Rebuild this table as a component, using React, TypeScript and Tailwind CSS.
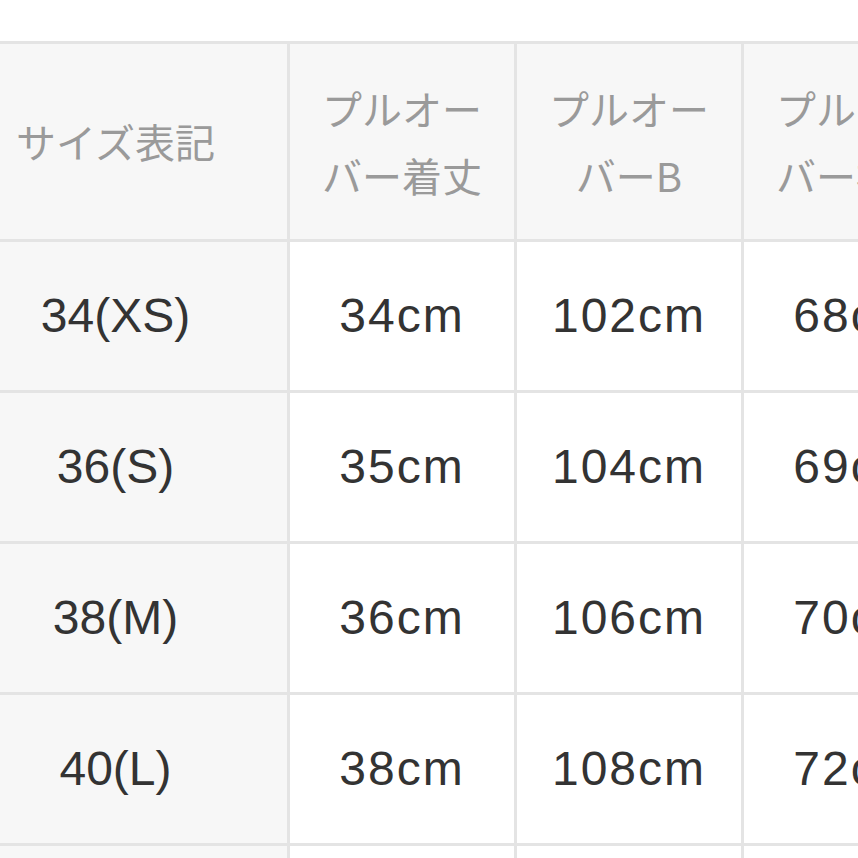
const header = [
  ["サイズ表記"],
  ["プルオー", "バー着丈"],
  ["プルオー", "バーB"],
  ["プルオー", "バー裄丈"],
];

const rows = [
  ["34(XS)", "34cm", "102cm", "68cm"],
  ["36(S)", "35cm", "104cm", "69cm"],
  ["38(M)", "36cm", "106cm", "70cm"],
  ["40(L)", "38cm", "108cm", "72cm"],
  ["", "", "", ""],
];

const cellBase =
  "flex flex-col items-center justify-center text-center border-r-[3px] border-b-[3px] border-[#e4e4e4]";

export default function App() {
  return (
    <div className="w-[858px] h-[858px] overflow-hidden bg-white pt-[41px]">
      <div
        className="-ml-[56px] w-[1027px] grid grid-cols-[346px_227px_227px_227px] border-t-[3px] border-[#e4e4e4]"
        style={{ fontFamily: '"Liberation Sans", "Noto Sans CJK JP", sans-serif' }}
      >
        {header.map((lines, i) => (
          <div
            key={i}
            className={`${cellBase} h-[198px] bg-[#f7f7f7] text-[40px] leading-[67px] text-[#9a9a9a]`}
            style={{ fontFamily: '"Noto Sans CJK JP", sans-serif' }}
          >
            {lines.map((l) => (
              <span key={l} className="whitespace-nowrap">
                {l}
              </span>
            ))}
          </div>
        ))}
        {rows.map((row, r) =>
          row.map((v, c) => (
            <div
              key={`${r}-${c}`}
              className={`${cellBase} h-[151px] text-[48px] text-[#333333] ${
                c === 0 ? "bg-[#f7f7f7]" : "bg-white tracking-[2px]"
              }`}
            >
              <span className="whitespace-nowrap">{v}</span>
            </div>
          ))
        )}
      </div>
    </div>
  );
}
